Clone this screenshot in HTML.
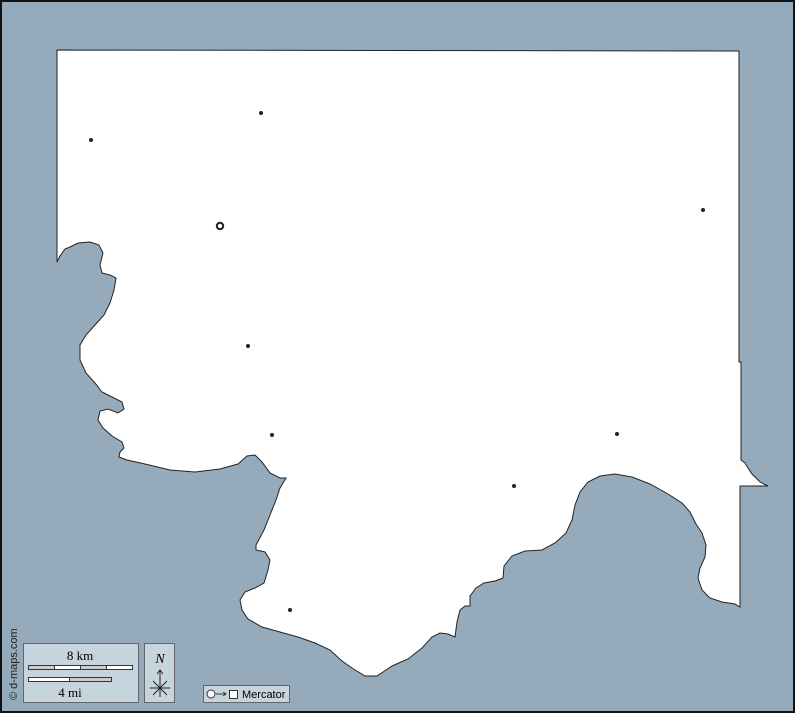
<!DOCTYPE html>
<html><head><style>
html,body{margin:0;padding:0;}
body{width:795px;height:713px;overflow:hidden;background:#95abbb;position:relative;font-family:"Liberation Serif",serif;}
#frame{position:absolute;left:0;top:0;width:791px;height:709px;border:2px solid #111;}
</style></head><body>
<div id="frame"></div>
<svg width="795" height="713" style="position:absolute;left:0;top:0">
<path fill="#fff" stroke="#222" stroke-width="1" d="M57,50 L739,51 L739,362 L741,362 L741,460 L745,463 L748,468 L752,474 L756,478 L760,482 L764,484 L768,486 L740,486 L740,607 L735,604 L722,602 L710,598 L702,590 L698,578 L700,568 L705,557 L706,545 L702,533 L696,524 L690,512 L682,503 L668,494 L650,484 L632,477 L615,474 L600,476 L588,482 L580,492 L575,505 L572,520 L566,533 L555,543 L542,550 L525,551 L512,556 L504,566 L503,578 L495,581 L484,583 L476,588 L470,596 L470,606 L465,606 L460,610 L457,622 L455,637 L448,634 L440,633 L432,637 L422,648 L408,659 L392,666 L377,676 L365,676 L352,668 L342,661 L330,650 L315,643 L298,637 L280,632 L262,627 L248,619 L242,610 L240,600 L245,592 L255,588 L264,583 L268,570 L270,560 L265,552 L256,550 L256,545 L264,530 L270,515 L276,500 L280,488 L286,478 L280,478 L270,473 L262,462 L255,455 L247,456 L238,464 L220,469 L195,472 L170,470 L145,464 L127,460 L119,457 L120,452 L124,448 L122,442 L112,436 L103,428 L98,420 L100,411 L108,409 L118,413 L124,409 L122,402 L112,397 L102,392 L95,383 L86,373 L80,360 L80,345 L86,335 L95,325 L104,315 L110,303 L114,290 L116,278 L110,275 L102,273 L100,265 L103,253 L99,245 L90,242 L78,243 L70,247 L65,249 L60,256 L57,262 Z"/>
<g fill="#222">
<circle cx="91" cy="140" r="2"/><circle cx="261" cy="113" r="2"/><circle cx="703" cy="210" r="2"/>
<circle cx="248" cy="346" r="2"/><circle cx="272" cy="435" r="2"/><circle cx="617" cy="434" r="2"/>
<circle cx="514" cy="486" r="2"/><circle cx="290" cy="610" r="2"/>
</g>
<circle cx="220" cy="226" r="3.2" fill="#fff" stroke="#222" stroke-width="2"/>
<rect x="23.5" y="643.5" width="115" height="59" fill="#c6d4de" stroke="#666"/>
<text x="80" y="660" font-size="13" text-anchor="middle" font-family="Liberation Serif">8 km</text>
<rect x="28.5" y="665.5" width="104" height="4" fill="#fff" stroke="#333"/>
<rect x="28.5" y="665.5" width="26" height="4" fill="#ccc" stroke="#333"/>
<rect x="80.5" y="665.5" width="26" height="4" fill="#ccc" stroke="#333"/>
<rect x="28.5" y="677.5" width="83" height="4" fill="#ccc" stroke="#333"/>
<rect x="28.5" y="677.5" width="41" height="4" fill="#fff" stroke="#333"/>
<text x="70" y="697" font-size="13" text-anchor="middle" font-family="Liberation Serif">4 mi</text>
<rect x="144.5" y="643.5" width="30" height="59" fill="#c6d4de" stroke="#666"/>
<text x="160" y="663" font-size="14" font-style="italic" text-anchor="middle" font-family="Liberation Serif">N</text>
<path d="M160,697 V670 M157,674 L160,670 L163,674 M150,688 H170 M153,681 L167,695 M167,681 L153,695" stroke="#222" stroke-width="1" fill="none"/>
<rect x="203.5" y="685.5" width="86" height="17" fill="#c6d4de" stroke="#666"/>
<circle cx="211" cy="694" r="4" fill="#fff" stroke="#333"/>
<path d="M216,694 H226 M223,692 L226,694 L223,696" stroke="#333" fill="none"/>
<rect x="229.5" y="690.5" width="8" height="8" fill="#fff" stroke="#333"/>
<text x="242" y="698" font-size="11" font-family="Liberation Sans">Mercator</text>
<text transform="translate(17,700) rotate(-90)" font-size="11" font-family="Liberation Sans" fill="#222">© d-maps.com</text>
</svg>
</body></html>
